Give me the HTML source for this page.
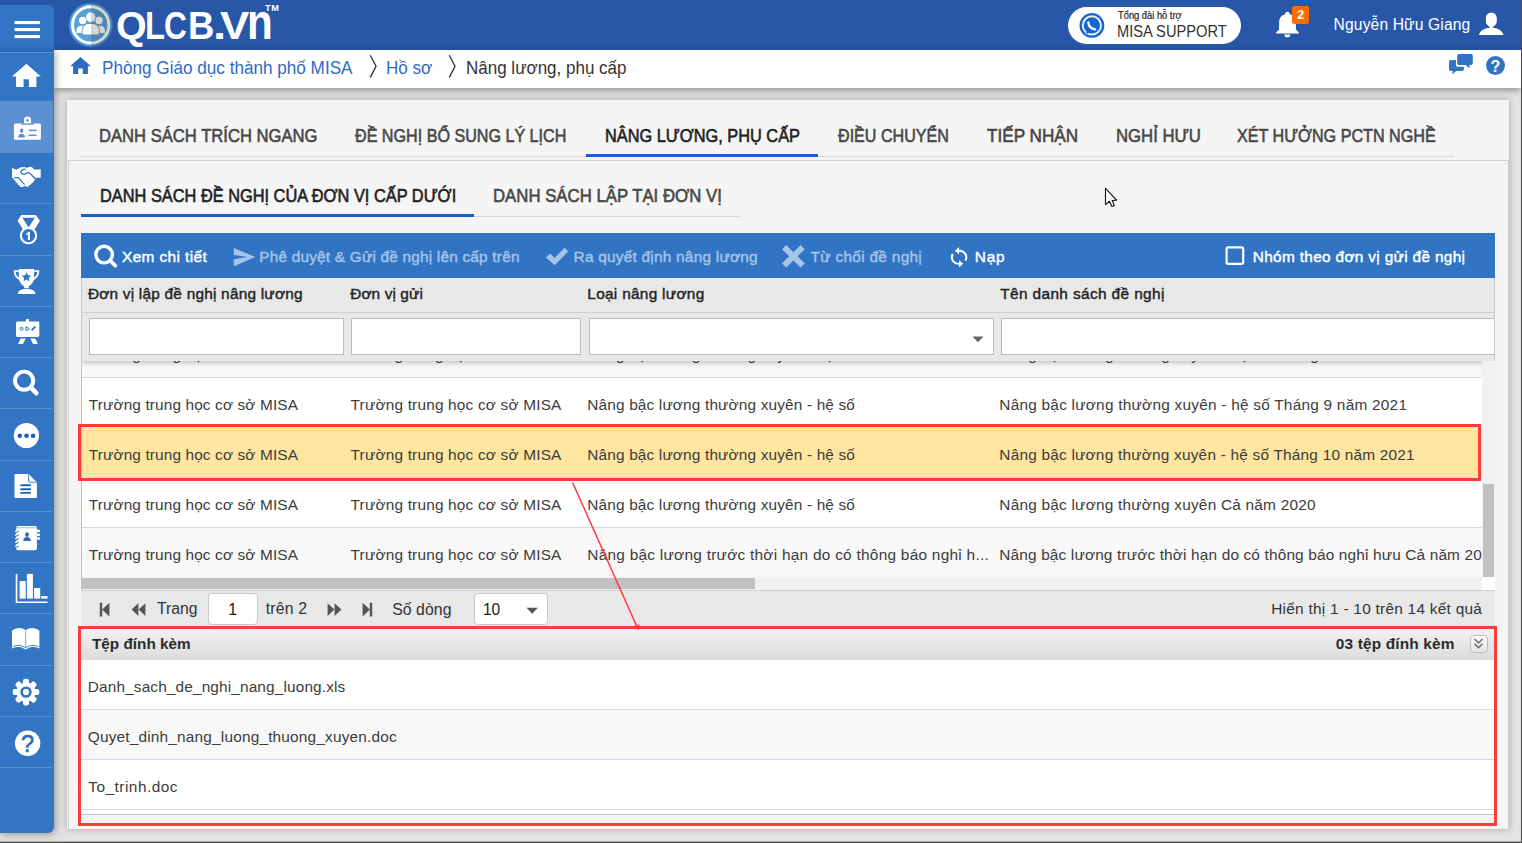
<!DOCTYPE html>
<html lang="vi"><head><meta charset="utf-8"><title>QLCB.VN - Nâng lương, phụ cấp</title>
<style>
html,body{margin:0;padding:0;}
body{width:1522px;height:843px;overflow:hidden;position:relative;background:#e3e3e3;font-family:"Liberation Sans", sans-serif;}
.a{position:absolute;}
.t{position:absolute;white-space:nowrap;}
svg{position:absolute;overflow:visible;}
.sep{position:absolute;left:0;width:53px;height:1px;background:#5990d2;}
.row{position:absolute;left:82px;width:1400px;height:49px;border-bottom:1px solid #d3dbe8;}
.fi{position:absolute;top:318px;height:35px;background:#fff;border:1px solid #bcbcbc;box-sizing:content-box;}
</style></head><body>
<div class="a" style="left:0;top:0;width:1521px;height:50px;background:#2857a7;"></div><svg style="left:62px;top:0" width="60" height="50" viewBox="0 0 60 50">
<defs><radialGradient id="lg" cx="50%" cy="50%" r="50%"><stop offset="0.93" stop-color="#4b98dc"/><stop offset="1" stop-color="#4b98dc" stop-opacity="0"/></radialGradient>
<clipPath id="lc"><circle cx="28.700" cy="24.900" r="22.200"/></clipPath></defs>
<circle cx="28.700" cy="24.900" r="22.600" fill="url(#lg)"/>
<circle cx="28.700" cy="24.900" r="18.200" fill="#5a9fd6" stroke="#fff" stroke-width="3"/>
<g fill="#fff">
<circle cx="20.700" cy="20.500" r="3.700"/><circle cx="37" cy="20.500" r="3.700"/>
<path d="M14.500 32.900v-2.600a4.600 4.600 0 0 1 4.600-4.600h3a4.600 4.600 0 0 1 4.600 4.600v2.600zM30.700 32.900v-2.600a4.600 4.600 0 0 1 4.600-4.600h3a4.600 4.600 0 0 1 4.600 4.600v2.600z"/>
<ellipse cx="28.700" cy="17.200" rx="5.300" ry="5.600" fill="#5a9fd6"/>
<ellipse cx="28.700" cy="17.200" rx="4.700" ry="5"/>
<path d="M20.100 34.400v-4a7 7 0 0 1 7-7h3.200a7 7 0 0 1 7 7v4z" stroke="#5a9fd6" stroke-width="1.100"/>
<path d="M20.700 33.600v-3.200a6.400 6.400 0 0 1 6.400-6.400h3.200a6.400 6.400 0 0 1 6.400 6.400v3.200a.8.800 0 0 1-.8.800h-14.400a.8.800 0 0 1-.8-.8z"/>
</g>
<rect x="29" y="0" width="31" height="50" fill="#2a2a2a" opacity=".2" clip-path="url(#lc)"/>
</svg><div class="logo"><span class="t" style="left:116.1px;top:7px;font-size:38.4px;line-height:38.4px;font-weight:700;color:#fff;letter-spacing:0.000px;transform:scaleX(1.0270);transform-origin:0 0;">Q</span><span class="t" style="left:144.8px;top:7px;font-size:38.4px;line-height:38.4px;font-weight:700;color:#fff;letter-spacing:0.000px;transform:scaleX(0.8534);transform-origin:0 0;">L</span><span class="t" style="left:164.4px;top:7px;font-size:38.4px;line-height:38.4px;font-weight:700;color:#fff;letter-spacing:0.000px;transform:scaleX(0.8249);transform-origin:0 0;">C</span><span class="t" style="left:188.4px;top:7px;font-size:38.4px;line-height:38.4px;font-weight:700;color:#fff;letter-spacing:0.000px;transform:scaleX(0.9505);transform-origin:0 0;">B</span><span class="t" style="left:213.0px;top:7px;font-size:38.4px;line-height:38.4px;font-weight:700;color:#fff;letter-spacing:0.000px;transform:scaleX(1.2343);transform-origin:0 0;">.</span><span class="t" style="left:220.0px;top:7px;font-size:38.4px;line-height:38.4px;font-weight:700;color:#fff;letter-spacing:0.000px;transform:scaleX(1.1447);transform-origin:0 0;">V</span><span class="t" style="left:247.2px;top:-3px;font-size:49.5px;line-height:49.5px;font-weight:700;color:#fff;letter-spacing:0.000px;transform:scaleX(0.8511);transform-origin:0 0;">n</span></div><span class="t" style="left:265.0px;top:4px;font-size:9.2px;line-height:9.2px;font-weight:700;color:#fff;letter-spacing:0.600px;">TM</span><div class="a" style="left:1068px;top:7px;width:173px;height:37px;border-radius:19px;background:#fff;"></div><svg style="left:1079px;top:13px" width="26" height="26" viewBox="0 0 26 26">
<circle cx="12.900" cy="12.400" r="12.400" fill="#1766d0"/>
<circle cx="12.900" cy="12.400" r="9.100" fill="none" stroke="#fff" stroke-width="1.900" opacity=".93"/>
<path d="M8.300 18.600l-1.500 2.900 3.600-1.300z" fill="#fff"/>
<circle cx="8.600" cy="19.300" r="1.300" fill="#1766d0"/>
<path d="M9.400 9.300C9.700 13.300 12.200 15.700 16.200 16.300" fill="none" stroke="#fff" stroke-width="2.300" stroke-linecap="round"/>
</svg><span class="t" style="left:1117.5px;top:11px;font-size:10px;line-height:10px;font-weight:400;color:#222;letter-spacing:0.000px;transform:scaleX(0.9324);transform-origin:0 0;-webkit-text-stroke:0.2px currentColor;">Tổng đài hỗ trợ</span><span class="t" style="left:1117.2px;top:24px;font-size:15.8px;line-height:15.8px;font-weight:400;color:#333;letter-spacing:0.000px;transform:scaleX(0.9282);transform-origin:0 0;">MISA SUPPORT</span><svg style="left:1275px;top:11px" width="26" height="27" viewBox="0 0 26 27"><g fill="#fff">
<circle cx="12.400" cy="3" r="2.300"/>
<path d="M4.100 18.600V11.600C4.100 6.200 7.600 2.900 12.500 2.900S20.900 6.200 20.900 11.600V18.600L23.700 21.300V22.500H1.200V21.300Z"/>
<path d="M9.400 23.400h5.900a2.950 2.950 0 0 1-5.900 0z"/>
</g></svg><div class="a" style="left:1292px;top:6px;width:17px;height:18px;border-radius:2.500px;background:#ff6d00;"></div><span class="t" style="left:1297.3px;top:9px;font-size:12.5px;line-height:12.5px;font-weight:700;color:#fff;letter-spacing:0.000px;">2</span><span class="t" style="left:1333.6px;top:17px;font-size:15.6px;line-height:15.6px;font-weight:400;color:#fff;letter-spacing:0.147px;">Nguyễn Hữu Giang</span><svg style="left:1479px;top:13px" width="25" height="22" viewBox="0 0 25 22">
<path fill="#fff" d="M12.350-.2C15.700-.2 17.800 1.900 17.800 5.200V8.200C17.800 10.800 16.200 12.600 14 13.800V14.800C19.500 15.400 23.600 17.800 24.400 22H0C.8 17.800 5 15.400 10.600 14.800V13.800C8.400 12.600 6.900 10.800 6.900 8.200V5.200C6.900 1.900 9-.2 12.350-.2Z"/></svg><div class="a" style="left:54px;top:50px;width:1467px;height:38px;background:#fff;box-shadow:0 2px 7px rgba(0,0,0,.38);"></div><svg style="left:70px;top:57px" width="21" height="17" viewBox="0 0 21 17"><path fill="#2d6cc0" d="M10.500 0L21 9.300h-3.100V17h-5.100v-5.600H8.200V17H3.100V9.300H0z"/></svg><span class="t" style="left:101.7px;top:60px;font-size:17.7px;line-height:17.7px;font-weight:400;color:#2d6cc0;letter-spacing:0.000px;transform:scaleX(0.9686);transform-origin:0 0;">Phòng Giáo dục thành phố MISA</span><span class="t" style="left:386.2px;top:60px;font-size:17.7px;line-height:17.7px;font-weight:400;color:#2d6cc0;letter-spacing:0.000px;transform:scaleX(0.9638);transform-origin:0 0;">Hồ sơ</span><span class="t" style="left:465.5px;top:60px;font-size:17.7px;line-height:17.7px;font-weight:400;color:#333;letter-spacing:0.000px;transform:scaleX(0.9609);transform-origin:0 0;">Nâng lương, phụ cấp</span><svg style="left:0;top:0" width="700" height="100"><path d="M370.300 55.200L376 66.300 370.300 77.400M449.300 55.200L455 66.300 449.300 77.400" fill="none" stroke="#333" stroke-width="1.35"/></svg><svg style="left:1449px;top:54px" width="24" height="21" viewBox="0 0 24 21"><g fill="#3174c4">
<path d="M10 0h12a1.800 1.800 0 0 1 1.800 1.800v7.400A1.800 1.800 0 0 1 22 11h-1.500l.3 3.600L16.500 11H10a1.800 1.800 0 0 1-1.800-1.800V1.800A1.800 1.800 0 0 1 10 0z"/>
<path d="M1.800 6H7v5.300c0 .8.700 1.500 1.500 1.500h6.400v2.400a1.800 1.800 0 0 1-1.800 1.800H7.200L3.200 20.600l.6-3.600H1.800A1.800 1.800 0 0 1 0 15.200V7.800A1.800 1.800 0 0 1 1.800 6z"/></g></svg><div class="a" style="left:1486.200px;top:55.900px;width:19.200px;height:19.200px;border-radius:50%;background:#3174c4;"></div><span class="t" style="left:1490.6px;top:59px;font-size:16px;line-height:16px;font-weight:700;color:#fff;letter-spacing:0.000px;">?</span><div class="a" style="left:67px;top:100px;width:1442px;height:729px;background:#f5f5f5;box-shadow:0 0 7px rgba(0,0,0,.27);"></div><div class="a" style="left:68px;top:160px;width:1441px;height:669px;border:1px solid #d0d0d0;border-bottom:none;box-sizing:border-box;"></div><div class="a" style="left:80px;top:156px;width:1374px;height:1px;background:#d8d8d8;"></div><div class="a" style="left:586px;top:154px;width:232px;height:3px;background:#1762c4;"></div><span class="t" style="left:98.8px;top:127px;font-size:18.4px;line-height:18.4px;font-weight:400;color:#484848;letter-spacing:0.000px;transform:scaleX(0.9033);transform-origin:0 0;-webkit-text-stroke:0.6px currentColor;">DANH SÁCH TRÍCH NGANG</span><span class="t" style="left:354.8px;top:127px;font-size:18.4px;line-height:18.4px;font-weight:400;color:#484848;letter-spacing:0.000px;transform:scaleX(0.8763);transform-origin:0 0;-webkit-text-stroke:0.6px currentColor;">ĐỀ NGHỊ BỔ SUNG LÝ LỊCH</span><span class="t" style="left:604.8px;top:127px;font-size:18.4px;line-height:18.4px;font-weight:400;color:#222;letter-spacing:0.000px;transform:scaleX(0.8881);transform-origin:0 0;-webkit-text-stroke:0.6px currentColor;">NÂNG LƯƠNG, PHỤ CẤP</span><span class="t" style="left:837.7px;top:127px;font-size:18.4px;line-height:18.4px;font-weight:400;color:#484848;letter-spacing:0.000px;transform:scaleX(0.8754);transform-origin:0 0;-webkit-text-stroke:0.6px currentColor;">ĐIỀU CHUYỂN</span><span class="t" style="left:987.2px;top:127px;font-size:18.4px;line-height:18.4px;font-weight:400;color:#484848;letter-spacing:0.000px;transform:scaleX(0.9320);transform-origin:0 0;-webkit-text-stroke:0.6px currentColor;">TIẾP NHẬN</span><span class="t" style="left:1115.6px;top:127px;font-size:18.4px;line-height:18.4px;font-weight:400;color:#484848;letter-spacing:0.000px;transform:scaleX(0.9099);transform-origin:0 0;-webkit-text-stroke:0.6px currentColor;">NGHỈ HƯU</span><span class="t" style="left:1236.5px;top:127px;font-size:18.4px;line-height:18.4px;font-weight:400;color:#484848;letter-spacing:0.000px;transform:scaleX(0.8783);transform-origin:0 0;-webkit-text-stroke:0.6px currentColor;">XÉT HƯỞNG PCTN NGHỀ</span><div class="a" style="left:81px;top:216px;width:660px;height:1px;background:#d8d8d8;"></div><div class="a" style="left:81px;top:214px;width:393px;height:3px;background:#1762c4;"></div><span class="t" style="left:99.6px;top:187px;font-size:18.4px;line-height:18.4px;font-weight:400;color:#222;letter-spacing:0.000px;transform:scaleX(0.8894);transform-origin:0 0;-webkit-text-stroke:0.6px currentColor;">DANH SÁCH ĐỀ NGHỊ CỦA ĐƠN VỊ CẤP DƯỚI</span><span class="t" style="left:493.4px;top:187px;font-size:18.4px;line-height:18.4px;font-weight:400;color:#484848;letter-spacing:0.000px;transform:scaleX(0.9116);transform-origin:0 0;-webkit-text-stroke:0.6px currentColor;">DANH SÁCH LẬP TẠI ĐƠN VỊ</span><div class="a" style="left:81px;top:233px;width:1414px;height:45px;background:#3174c4;"></div><svg style="left:0;top:0" width="1522" height="300">
<circle cx="104.1" cy="254.600" r="8.300" fill="none" stroke="#fff" stroke-width="3.400"/>
<path d="M110.600 261.200L115.300 265.700" stroke="#fff" stroke-width="3.700" stroke-linecap="round"/>
<path d="M233.800 248l21.600 9.100-21.600 9.100v-6.900l13.800-2.200-13.800-2.200z" fill="#a6c3e8"/>
<path d="M545.900 257.600l4.300-4.200 4.500 4.600 9.900-10.300 3.600 3.800-13.500 13.800z" fill="#a6c3e8"/>
<path d="M782 249.300l4.200-4.200 7.200 7.100 7.200-7.100 4.200 4.200-7.200 7 7.200 7-4.200 4.200-7.200-7.100-7.200 7.100-4.200-4.200 7.200-7z" fill="#a6c3e8"/>
<g transform="translate(946.600 246.100) scale(1.04 0.935)" fill="#fff"><path d="M12 4V1L8 5l4 4V6c3.310 0 6 2.690 6 6 0 1.010-.25 1.970-.7 2.800l1.460 1.460C19.540 15.030 20 13.570 20 12c0-4.420-3.580-8-8-8zm0 14c-3.310 0-6-2.690-6-6 0-1.010.25-1.970.7-2.800L5.240 7.740C4.460 8.970 4 10.430 4 12c0 4.420 3.580 8 8 8v3l4-4-4-4v3z"/></g>
<rect x="1226.600" y="247.300" width="16.600" height="16.600" rx="1.600" fill="none" stroke="#fff" stroke-width="2.200"/>
</svg><span class="t" style="left:122.0px;top:249px;font-size:15.4px;line-height:15.4px;font-weight:400;color:#fff;letter-spacing:0.400px;-webkit-text-stroke:0.42px currentColor;">Xem chi tiết</span><span class="t" style="left:259.2px;top:249px;font-size:15.4px;line-height:15.4px;font-weight:400;color:#a6c3e8;letter-spacing:0.200px;-webkit-text-stroke:0.42px currentColor;">Phê duyệt &amp; Gửi đề nghị lên cấp trên</span><span class="t" style="left:573.6px;top:249px;font-size:15.4px;line-height:15.4px;font-weight:400;color:#a6c3e8;letter-spacing:0.230px;-webkit-text-stroke:0.42px currentColor;">Ra quyết định nâng lương</span><span class="t" style="left:810.6px;top:249px;font-size:15.4px;line-height:15.4px;font-weight:400;color:#a6c3e8;letter-spacing:0.300px;-webkit-text-stroke:0.42px currentColor;">Từ chối đề nghị</span><span class="t" style="left:974.8px;top:249px;font-size:15.4px;line-height:15.4px;font-weight:400;color:#fff;letter-spacing:0.800px;-webkit-text-stroke:0.42px currentColor;">Nạp</span><span class="t" style="left:1252.7px;top:249px;font-size:15.4px;line-height:15.4px;font-weight:400;color:#fff;letter-spacing:0.326px;-webkit-text-stroke:0.42px currentColor;">Nhóm theo đơn vị gửi đề nghị</span><div class="a" style="left:82px;top:361px;width:1400px;height:216px;background:#fff;"></div><div class="a" style="left:82px;top:361px;width:1400px;height:216px;overflow:hidden;"><div class="a" style="left:-82px;top:-361px;width:1522px;height:843px;"><div class="row" style="top:328px;background:#f8f8f8;"></div><span class="t" style="left:88.8px;top:347px;font-size:15.4px;line-height:15.4px;font-weight:400;color:#3c3c3c;letter-spacing:0.123px;">Trường trung học cơ sở MISA</span><span class="t" style="left:350.6px;top:347px;font-size:15.4px;line-height:15.4px;font-weight:400;color:#3c3c3c;letter-spacing:0.185px;">Trường trung học cơ sở MISA</span><span class="t" style="left:587.3px;top:347px;font-size:15.4px;line-height:15.4px;font-weight:400;color:#3c3c3c;letter-spacing:0.153px;">Nâng bậc lương thường xuyên - hệ số</span><span class="t" style="left:999.3px;top:347px;font-size:15.4px;line-height:15.4px;font-weight:400;color:#3c3c3c;letter-spacing:0.237px;">Nâng bậc lương thường xuyên - hệ số Tháng 8 năm 2021</span><div class="row" style="top:378px;background:#fff;"></div><span class="t" style="left:88.8px;top:397px;font-size:15.4px;line-height:15.4px;font-weight:400;color:#3c3c3c;letter-spacing:0.123px;">Trường trung học cơ sở MISA</span><span class="t" style="left:350.6px;top:397px;font-size:15.4px;line-height:15.4px;font-weight:400;color:#3c3c3c;letter-spacing:0.185px;">Trường trung học cơ sở MISA</span><span class="t" style="left:587.3px;top:397px;font-size:15.4px;line-height:15.4px;font-weight:400;color:#3c3c3c;letter-spacing:0.153px;">Nâng bậc lương thường xuyên - hệ số</span><span class="t" style="left:999.3px;top:397px;font-size:15.4px;line-height:15.4px;font-weight:400;color:#3c3c3c;letter-spacing:0.237px;">Nâng bậc lương thường xuyên - hệ số Tháng 9 năm 2021</span><div class="row" style="top:428px;background:#ffe6a0;"></div><span class="t" style="left:88.8px;top:447px;font-size:15.4px;line-height:15.4px;font-weight:400;color:#3c3c3c;letter-spacing:0.123px;">Trường trung học cơ sở MISA</span><span class="t" style="left:350.6px;top:447px;font-size:15.4px;line-height:15.4px;font-weight:400;color:#3c3c3c;letter-spacing:0.185px;">Trường trung học cơ sở MISA</span><span class="t" style="left:587.3px;top:447px;font-size:15.4px;line-height:15.4px;font-weight:400;color:#3c3c3c;letter-spacing:0.153px;">Nâng bậc lương thường xuyên - hệ số</span><span class="t" style="left:999.3px;top:447px;font-size:15.4px;line-height:15.4px;font-weight:400;color:#3c3c3c;letter-spacing:0.215px;">Nâng bậc lương thường xuyên - hệ số Tháng 10 năm 2021</span><div class="row" style="top:478px;background:#fff;"></div><span class="t" style="left:88.8px;top:497px;font-size:15.4px;line-height:15.4px;font-weight:400;color:#3c3c3c;letter-spacing:0.123px;">Trường trung học cơ sở MISA</span><span class="t" style="left:350.6px;top:497px;font-size:15.4px;line-height:15.4px;font-weight:400;color:#3c3c3c;letter-spacing:0.185px;">Trường trung học cơ sở MISA</span><span class="t" style="left:587.3px;top:497px;font-size:15.4px;line-height:15.4px;font-weight:400;color:#3c3c3c;letter-spacing:0.153px;">Nâng bậc lương thường xuyên - hệ số</span><span class="t" style="left:999.3px;top:497px;font-size:15.4px;line-height:15.4px;font-weight:400;color:#3c3c3c;letter-spacing:0.224px;">Nâng bậc lương thường xuyên Cả năm 2020</span><div class="row" style="top:528px;background:#f8f8f8;"></div><span class="t" style="left:88.8px;top:547px;font-size:15.4px;line-height:15.4px;font-weight:400;color:#3c3c3c;letter-spacing:0.123px;">Trường trung học cơ sở MISA</span><span class="t" style="left:350.6px;top:547px;font-size:15.4px;line-height:15.4px;font-weight:400;color:#3c3c3c;letter-spacing:0.185px;">Trường trung học cơ sở MISA</span><span class="t" style="left:587.3px;top:547px;font-size:15.4px;line-height:15.4px;font-weight:400;color:#3c3c3c;letter-spacing:0.265px;">Nâng bậc lương trước thời hạn do có thông báo nghỉ h...</span><span class="t" style="left:999.3px;top:547px;font-size:15.4px;line-height:15.4px;font-weight:400;color:#3c3c3c;letter-spacing:0.155px;">Nâng bậc lương trước thời hạn do có thông báo nghỉ hưu Cả năm 2020</span></div></div><div class="a" style="left:81px;top:278px;width:1414px;height:83px;background:#e8e8e8;box-shadow:0 2px 5px rgba(0,0,0,.22);clip-path:inset(0 0 -12px 0);"></div><div class="a" style="left:81px;top:312px;width:1414px;height:1px;background:#cfcfcf;"></div><span class="t" style="left:87.9px;top:286px;font-size:15.4px;line-height:15.4px;font-weight:400;color:#222;letter-spacing:0.221px;-webkit-text-stroke:0.4px currentColor;">Đơn vị lập đề nghị nâng lương</span><span class="t" style="left:350.2px;top:286px;font-size:15.4px;line-height:15.4px;font-weight:400;color:#222;letter-spacing:0.100px;-webkit-text-stroke:0.4px currentColor;">Đơn vị gửi</span><span class="t" style="left:587.3px;top:286px;font-size:15.4px;line-height:15.4px;font-weight:400;color:#222;letter-spacing:0.293px;-webkit-text-stroke:0.4px currentColor;">Loại nâng lương</span><span class="t" style="left:1000.2px;top:286px;font-size:15.4px;line-height:15.4px;font-weight:400;color:#222;letter-spacing:0.380px;-webkit-text-stroke:0.4px currentColor;">Tên danh sách đề nghị</span><div class="fi" style="left:89px;width:253px;"></div><div class="fi" style="left:351px;width:228px;"></div><div class="fi" style="left:589px;width:403px;"></div><div class="fi" style="left:1001px;width:493px;border-right:none;"></div><svg style="left:972px;top:336px" width="12" height="7"><path d="M0.500 0.500h11L6 6.300z" fill="#666"/></svg><div class="a" style="left:81px;top:278px;width:1px;height:348px;background:#c2c2c2;"></div><div class="a" style="left:1494px;top:278px;width:1px;height:348px;background:#c8c8c8;"></div><div class="a" style="left:1482px;top:361px;width:13px;height:216px;background:#f1f1f1;"></div><div class="a" style="left:1483px;top:484px;width:11px;height:93px;background:#c1c1c1;"></div><div class="a" style="left:82px;top:577px;width:1400px;height:13px;background:#f1f1f1;"></div><div class="a" style="left:82px;top:578px;width:673px;height:11px;background:#c1c1c1;"></div><div class="a" style="left:1482px;top:577px;width:13px;height:13px;background:#fff;"></div><div class="a" style="left:81px;top:590px;width:1414px;height:36px;background:#e8e8e8;border-top:1px solid #cfcfcf;box-sizing:border-box;"></div><div class="a" style="left:208px;top:593px;width:48px;height:30px;background:#fff;border:1px solid #c8c8c8;border-radius:4px;"></div><div class="a" style="left:474px;top:593px;width:72px;height:30px;background:#fff;border:1px solid #c8c8c8;border-radius:4px;"></div><svg style="left:0;top:560px" width="600" height="80"><g fill="#555">
<path d="M99.800 42.800h2.400v13.600h-2.400zM109.400 42.800v13.600l-7.200-6.800z"/>
<path d="M138.400 43.200v12.800l-6.800-6.400zM145.400 43.200v12.800l-6.800-6.400z"/>
<path d="M327.600 43.200v12.800l6.800-6.400zM334.600 43.200v12.800l6.800-6.400z"/>
<path d="M369.800 42.800h2.400v13.600h-2.400zM362.600 42.800v13.600l7.200-6.800z"/>
<path d="M526.600 47.800h11.200l-5.600 6z"/></g></svg><span class="t" style="left:157.2px;top:601px;font-size:15.8px;line-height:15.8px;font-weight:400;color:#333;letter-spacing:0.000px;transform:scaleX(0.9977);transform-origin:0 0;">Trang</span><span class="t" style="left:228.3px;top:602px;font-size:15.8px;line-height:15.8px;font-weight:400;color:#222;letter-spacing:0.000px;">1</span><span class="t" style="left:265.7px;top:601px;font-size:15.8px;line-height:15.8px;font-weight:400;color:#333;letter-spacing:0.180px;">trên 2</span><span class="t" style="left:392.2px;top:602px;font-size:15.8px;line-height:15.8px;font-weight:400;color:#333;letter-spacing:0.067px;">Số dòng</span><span class="t" style="left:482.6px;top:602px;font-size:15.8px;line-height:15.8px;font-weight:400;color:#222;letter-spacing:0.000px;transform:scaleX(0.9814);transform-origin:0 0;">10</span><span class="t" style="left:1271.2px;top:601px;font-size:15.4px;line-height:15.4px;font-weight:400;color:#333;letter-spacing:0.263px;">Hiển thị 1 - 10 trên 14 kết quả</span><div class="a" style="left:81px;top:629px;width:1414px;height:31px;background:linear-gradient(#f1f1f1,#dcdcdc);"></div><span class="t" style="left:92.2px;top:636px;font-size:15.4px;line-height:15.4px;font-weight:700;color:#2b2b2b;letter-spacing:0.000px;transform:scaleX(0.9939);transform-origin:0 0;">Tệp đính kèm</span><span class="t" style="left:1335.8px;top:636px;font-size:15.4px;line-height:15.4px;font-weight:700;color:#2b2b2b;letter-spacing:0.157px;">03 tệp đính kèm</span><div class="a" style="left:1469.500px;top:635px;width:16px;height:16px;border:1px solid #bdbdbd;border-radius:4px;background:linear-gradient(#fdfdfd,#e4e4e4);"></div><svg style="left:1469px;top:634px" width="20" height="20"><path d="M5.500 5l4 3.800 4-3.800M5.500 9.800l4 3.800 4-3.800" fill="none" stroke="#777" stroke-width="1.700"/></svg><div class="a" style="left:81px;top:660px;width:1414px;height:154px;background:#fff;"></div><div class="a" style="left:81px;top:660px;width:1414px;height:49px;background:#fff;border-bottom:1px solid #d3dbe8;"></div><span class="t" style="left:87.8px;top:679px;font-size:15.4px;line-height:15.4px;font-weight:400;color:#3c3c3c;letter-spacing:0.135px;">Danh_sach_de_nghi_nang_luong.xls</span><div class="a" style="left:81px;top:710px;width:1414px;height:49px;background:#f8f8f8;border-bottom:1px solid #d3dbe8;"></div><span class="t" style="left:87.8px;top:729px;font-size:15.4px;line-height:15.4px;font-weight:400;color:#3c3c3c;letter-spacing:0.184px;">Quyet_dinh_nang_luong_thuong_xuyen.doc</span><div class="a" style="left:81px;top:760px;width:1414px;height:49px;background:#fff;border-bottom:1px solid #d3dbe8;"></div><span class="t" style="left:88.2px;top:779px;font-size:15.4px;line-height:15.4px;font-weight:400;color:#3c3c3c;letter-spacing:0.500px;">To_trinh.doc</span><div class="a" style="left:81px;top:814px;width:1414px;height:1px;background:#c4c4c4;"></div><div class="a" style="left:78px;top:424px;width:1397px;height:51px;border:3px solid #fb3d3d;"></div><div class="a" style="left:78px;top:626px;width:1413px;height:194px;border:3px solid #fb3d3d;"></div><svg style="left:0;top:0" width="1522" height="843"><path d="M572.600 482.500L638 629" stroke="#fb3d3d" stroke-width="1.500" fill="none"/><path d="M634.300 625.500l4.300 4.700 1-5.600" fill="#fb3d3d"/></svg><svg style="left:1100px;top:185px" width="22" height="26"><path d="M5.500 3.400V19.600L9.400 16.300 11.900 21.500 14.300 20.500 12.200 15.500 16.600 15.100Z" fill="#fff" stroke="#14141c" stroke-width="1.150" stroke-linejoin="round"/></svg><div class="a" style="left:0;top:50px;width:54px;height:783px;border-radius:0 0 6px 0;box-shadow:1px 1px 9px rgba(0,0,0,.38);clip-path:inset(0 -20px -20px 0);"></div><div class="a" style="left:0;top:5px;width:54px;height:828px;background:#3275c4;border-radius:0 6px 6px 0;"></div><div class="a" style="left:0;top:101px;width:53px;height:52px;background:#5b90d2;"></div><div class="a" style="left:0;top:44px;width:54px;height:8px;background:linear-gradient(rgba(10,30,90,0),rgba(10,30,90,.16));"></div><div class="sep" style="top:52px;"></div><div class="sep" style="top:203px;"></div><div class="sep" style="top:255px;"></div><div class="sep" style="top:306px;"></div><div class="sep" style="top:357px;"></div><div class="sep" style="top:408px;"></div><div class="sep" style="top:460px;"></div><div class="sep" style="top:511px;"></div><div class="sep" style="top:562px;"></div><div class="sep" style="top:613px;"></div><div class="sep" style="top:665px;"></div><div class="sep" style="top:716px;"></div><div class="sep" style="top:767px;"></div><svg style="left:0;top:0" width="54" height="843" viewBox="0 0 54 843"><g fill="#fff">
<!-- hamburger -->
<rect x="14.600" y="21" width="25.300" height="3.100"/><rect x="14.600" y="28" width="25.300" height="3.100"/><rect x="14.600" y="35" width="25.300" height="3.100"/>
<!-- home -->
<path d="M26.400 63.700L40.800 76.600H36.400V87.100H28.900V79.200H23.600V87.100H16V76.600H12z"/>
<!-- id card -->
<path d="M15.400 123.400h8.600v-3.400a3.500 3.500 0 0 1 7 0v3.400h8.400a1.500 1.500 0 0 1 1.500 1.500v13.400a1.500 1.500 0 0 1-1.500 1.500h-24a1.500 1.500 0 0 1-1.500-1.500v-13.400a1.500 1.500 0 0 1 1.500-1.500z"/>
<circle cx="27.500" cy="120.200" r="1.300" fill="#5b90d2"/>
<rect x="21" y="123.400" width="13" height="1.300" fill="#5b90d2"/>
<g fill="#5b90d2"><ellipse cx="21.600" cy="130.600" rx="1.700" ry="2.200"/><path d="M18.200 137.600c0-2.600 1.300-3.900 3.400-3.900s3.400 1.300 3.400 3.900z"/><rect x="28.600" y="129.600" width="8" height="1.500"/><rect x="28.600" y="134.600" width="8" height="1.500"/></g>
<!-- handshake -->
<path d="M12 168.100L16.300 169.700 20.900 167.300 25 167.100 26.200 168 29 167.100 31.800 167.100 34.200 169.500 38.700 169.500 40.700 168.900V177.700H35.200L35.400 179.600 33.800 180.900 33.600 182 31.600 183.200 31.200 184.300 29 185.400 28.400 186.400 26.600 186.900 25 185.700 24.400 186.300 22.400 186.900H20.100L19.600 185.400 17.700 184.400 17.400 183 15.600 182.200 15.400 180.600 13.900 179.900 13.800 178.600 12 177.700Z"/>
<path d="M25.600 169.200C22.500 169.300 20.500 170.600 20.900 172.300 21.300 174.100 23 174.400 25 174.100L27.600 172.800C28.600 172.500 29.400 172.800 30 173.400L35.300 178.700" fill="none" stroke="#2a6cc2" stroke-width="1.250"/>
<path d="M14.400 177.600H18.300L24.600 184.600" fill="none" stroke="#2a6cc2" stroke-width="1.100"/>
<path d="M27.400 183.600l1.300-1.500M29.400 181.800l1.300-1.500M31.300 180l1.300-1.500" fill="none" stroke="#3275c4" stroke-width=".5" opacity=".5"/>
<!-- medal -->
<path d="M17.600 220.800l3.600-5.700h14.600l4.200 5.700-5.800 9.300-5.700-2.100-5.200 2.100z"/>
<path d="M22.400 217.700h12.400l-6.200 9.800z" fill="#3275c4"/>
<circle cx="28.500" cy="235.600" r="7.700" fill="#3275c4" stroke="#fff" stroke-width="2.100"/>
<path d="M26.400 233.300l2.600-1.600h.9v8.200h-2v-5.700l-1.500.8z"/>
<!-- trophy -->
<path d="M18.800 269H34.200V276.500C34.200 282 31.200 285 28.800 286.200V288.200H24.200V286.200C21.800 285 18.800 282 18.800 276.500Z"/>
<path d="M18.800 271.100h-4.200c.2 4.200 2.100 6.900 5.600 8.200M34.200 271.100h4.200c-.2 4.200-2.100 6.900-5.600 8.200" fill="none" stroke="#fff" stroke-width="1.800"/>
<path d="M17.900 294.100C17.900 290.600 21 289 26.600 289S35.400 290.600 35.400 294.100Z"/>
<path d="M26.500 272.200l1.450 2.950 3.250.45-2.350 2.300.55 3.250-2.900-1.550-2.900 1.550.55-3.250-2.350-2.300 3.250-.45z" fill="#3275c4"/>
<!-- board -->
<rect x="25.800" y="319" width="3.300" height="3.400" rx=".8"/>
<rect x="16" y="321.400" width="23.300" height="15.600" rx="1.400"/>
<path d="M20.700 338.400h5l-2.700 5.500h-5zM30.600 338.400h-.2l2.700 5.500h4.800l-2.700-5.500z"/>
<g fill="none" stroke="#3275c4" stroke-width="1"><rect x="20.300" y="327.600" width="2.600" height="2.400" rx=".6"/><path d="M26 326v4.300h1.800a1.300 1.300 0 0 0 0-2.600H26"/><path d="M31.600 330.300l3.700-3.800" stroke-width="1.800"/></g>
<!-- search -->
<circle cx="24.100" cy="380.700" r="9.100" fill="none" stroke="#fff" stroke-width="3.900"/>
<path d="M31 387.700l5.300 5.500" stroke="#fff" stroke-width="4.600" stroke-linecap="round"/>
<!-- dots -->
<circle cx="26.400" cy="435.500" r="12.600"/>
<g fill="#1c5cba"><circle cx="19.800" cy="435.700" r="2.300"/><circle cx="26.500" cy="435.700" r="2.300"/><circle cx="33.100" cy="435.700" r="2.300"/></g>
<!-- doc -->
<path d="M15.700 473.900h12.900l8.300 8.300v14.700a1.200 1.200 0 0 1-1.200 1.200h-20a1.200 1.200 0 0 1-1.200-1.200v-21.800a1.200 1.200 0 0 1 1.200-1.200z"/>
<path d="M28.600 474.300v6.700a1.200 1.200 0 0 0 1.200 1.200h6.700" fill="none" stroke="#3275c4" stroke-width=".9"/>
<g fill="#1c5cba"><rect x="20.300" y="484.300" width="10.600" height="1.900"/><rect x="20.300" y="488.300" width="10.600" height="1.900"/><rect x="20.300" y="492" width="10.600" height="1.700"/></g>
<!-- address book -->
<rect x="16.200" y="526" width="20.700" height="24.200" rx="1.600"/>
<rect x="16.200" y="527.400" width="20.700" height="0.800" fill="#3275c4" opacity=".6"/>
<g stroke="#3275c4" stroke-width="1.300"><path d="M14.800 532.800l3.800-1.600M14.800 536.500l3.800-1.600M14.800 540.200l3.800-1.600M14.800 543.900l3.800-1.600M14.800 547.600l3.800-1.600"/></g>
<g stroke="#fff" stroke-width="1.300"><path d="M15 531.600l2.400-1M15 535.300l2.400-1M15 539l2.400-1M15 542.700l2.400-1M15 546.400l2.400-1"/></g>
<rect x="36.900" y="529.700" width="3" height="2.400"/><rect x="36.900" y="533.500" width="3" height="2.400"/><rect x="36.900" y="537.300" width="3" height="2.400"/>
<g fill="#2a6cc2"><ellipse cx="27" cy="534.600" rx="1.900" ry="2.400"/><path d="M23.200 541c0-2.700 1.500-3.900 3.800-3.900s3.800 1.200 3.800 3.900z"/></g>
<!-- chart -->
<path d="M15.700 573.900h1.700v27.500h30.100v1.600h-31.800z"/>
<rect x="19.600" y="581.100" width="6.100" height="17.500"/><rect x="26.900" y="573.900" width="6" height="24.700"/><rect x="34.100" y="588" width="6.100" height="10.600"/><rect x="41.200" y="596.100" width="6.300" height="2.500"/>
<!-- book -->
<path d="M12 630.800c4.500-3.600 10-3.400 13.700-.4 3.700-3 9.200-3.200 13.700.4v17.600c-4.200-2-9.200-1.900-12.200.3-.5.900-2.500.9-3 0-3-2.200-8-2.300-12.200-.3z"/>
<path d="M25.700 631v16.500" stroke="#3275c4" stroke-width=".9" opacity=".7"/>
<path d="M12.600 646.600c4.200-1.800 8.800-1.600 11.800.5.800.7 1.800.7 2.600 0 3-2.100 7.600-2.300 11.800-.5" fill="none" stroke="#3275c4" stroke-width=".9"/>
<!-- gear -->
<g transform="translate(26 692.100)">
<circle r="9.600"/>
<g><rect x="-3" y="-13.300" width="6" height="8" rx="2.200"/><rect x="-3" y="5.300" width="6" height="8" rx="2.200"/><rect x="-13.300" y="-3" width="8" height="6" rx="2.200"/><rect x="5.300" y="-3" width="8" height="6" rx="2.200"/>
<g transform="rotate(45)"><rect x="-3" y="-13.300" width="6" height="8" rx="2.200"/><rect x="-3" y="5.300" width="6" height="8" rx="2.200"/><rect x="-13.300" y="-3" width="8" height="6" rx="2.200"/><rect x="5.300" y="-3" width="8" height="6" rx="2.200"/></g></g>
<circle r="4.400" fill="#fff" stroke="#3275c4" stroke-width="2.600"/>
</g>
<!-- help -->
<circle cx="27.600" cy="743.300" r="12.700"/>
</g>
<text x="27.600" y="752" text-anchor="middle" font-family="Liberation Sans, sans-serif" font-size="23.500" fill="#2a6cc2" stroke="#2a6cc2" stroke-width=".55">?</text>
</svg>
<div class="a" style="left:1521px;top:0;width:1px;height:843px;background:#4a4a4a;"></div><div class="a" style="left:0;top:841px;width:1522px;height:1px;background:rgba(70,70,70,.35);"></div><div class="a" style="left:0;top:842px;width:1522px;height:1px;background:#4c4c4c;"></div></body></html>
